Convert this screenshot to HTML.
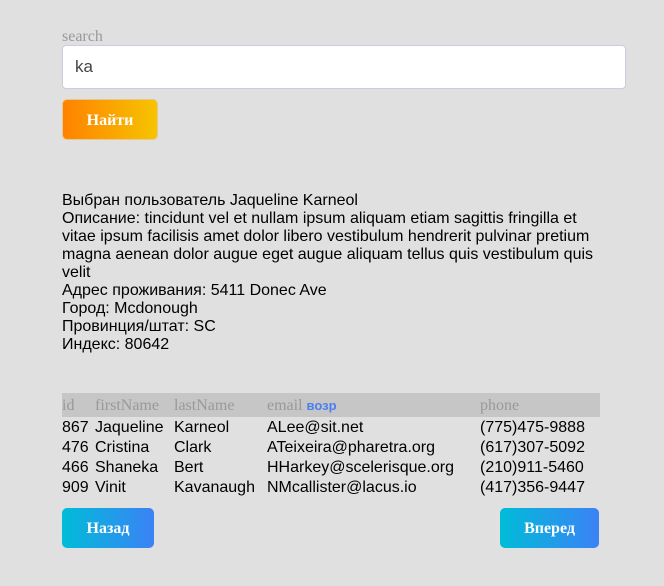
<!DOCTYPE html>
<html><head><meta charset="utf-8"><style>
body{margin:0;width:664px;height:586px;background:#e0e0e0;font-family:"Liberation Sans",sans-serif;position:relative;overflow:hidden}
.a{position:absolute}
.lbl{left:62px;top:28px;font:16px "Liberation Serif",serif;color:#999}
.inp{left:62px;top:45px;background:#fff;border:1px solid #ccd;border-radius:4px;box-sizing:border-box;width:564px;height:44px;font-size:17px;color:#444;padding:11px 0 0 12px}
.btn{border-radius:5px;color:#fff;font:bold 16px "Liberation Serif",serif;text-align:center;box-sizing:border-box}
.info{left:62px;top:192px;width:540px;font-size:16px;line-height:18px;color:#000}
.th{left:62px;top:393px;width:538px;height:24px;background:#c6c6c6}
.h{font:16px "Liberation Serif",serif;color:#999;top:397px}
.r{font-size:16px;color:#000}
</style></head><body>
<div class="a lbl">search</div>
<div class="a inp">ka</div>
<div class="a btn" style="left:62px;top:99px;width:96px;height:41px;line-height:42px;background:linear-gradient(90deg,#ff8200,#f6c400);border:1px solid #e8c890">Найти</div>
<div class="a info">Выбран пользователь Jaqueline Karneol<br>Описание: tincidunt vel et nullam ipsum aliquam etiam sagittis fringilla et vitae ipsum facilisis amet dolor libero vestibulum hendrerit pulvinar pretium magna aenean dolor augue eget augue aliquam tellus quis vestibulum quis velit<br>Адрес проживания: 5411 Donec Ave<br>Город: Mcdonough<br>Провинция/штат: SC<br>Индекс: 80642</div>
<div class="a th"></div>
<div class="a h" style="left:62px">id</div>
<div class="a h" style="left:95px">firstName</div>
<div class="a h" style="left:174px">lastName</div>
<div class="a h" style="left:267px">email <span style="font:bold 13px 'Liberation Sans',sans-serif;color:#4a7ff0">возр</span></div>
<div class="a h" style="left:480px">phone</div>
<div class="a r" style="left:62px;top:418px;line-height:20px">867<br>476<br>466<br>909</div>
<div class="a r" style="left:95px;top:418px;line-height:20px">Jaqueline<br>Cristina<br>Shaneka<br>Vinit</div>
<div class="a r" style="left:174px;top:418px;line-height:20px">Karneol<br>Clark<br>Bert<br>Kavanaugh</div>
<div class="a r" style="left:267px;top:418px;line-height:20px">ALee@sit.net<br>ATeixeira@pharetra.org<br>HHarkey@scelerisque.org<br>NMcallister@lacus.io</div>
<div class="a r" style="left:480px;top:418px;line-height:20px">(775)475-9888<br>(617)307-5092<br>(210)911-5460<br>(417)356-9447</div>
<div class="a btn" style="left:62px;top:508px;width:92px;height:40px;line-height:41px;background:linear-gradient(90deg,#00bcd8,#3b82f6)">Назад</div>
<div class="a btn" style="left:500px;top:508px;width:99px;height:40px;line-height:41px;background:linear-gradient(90deg,#00bcd8,#3b82f6)">Вперед</div>
</body></html>
